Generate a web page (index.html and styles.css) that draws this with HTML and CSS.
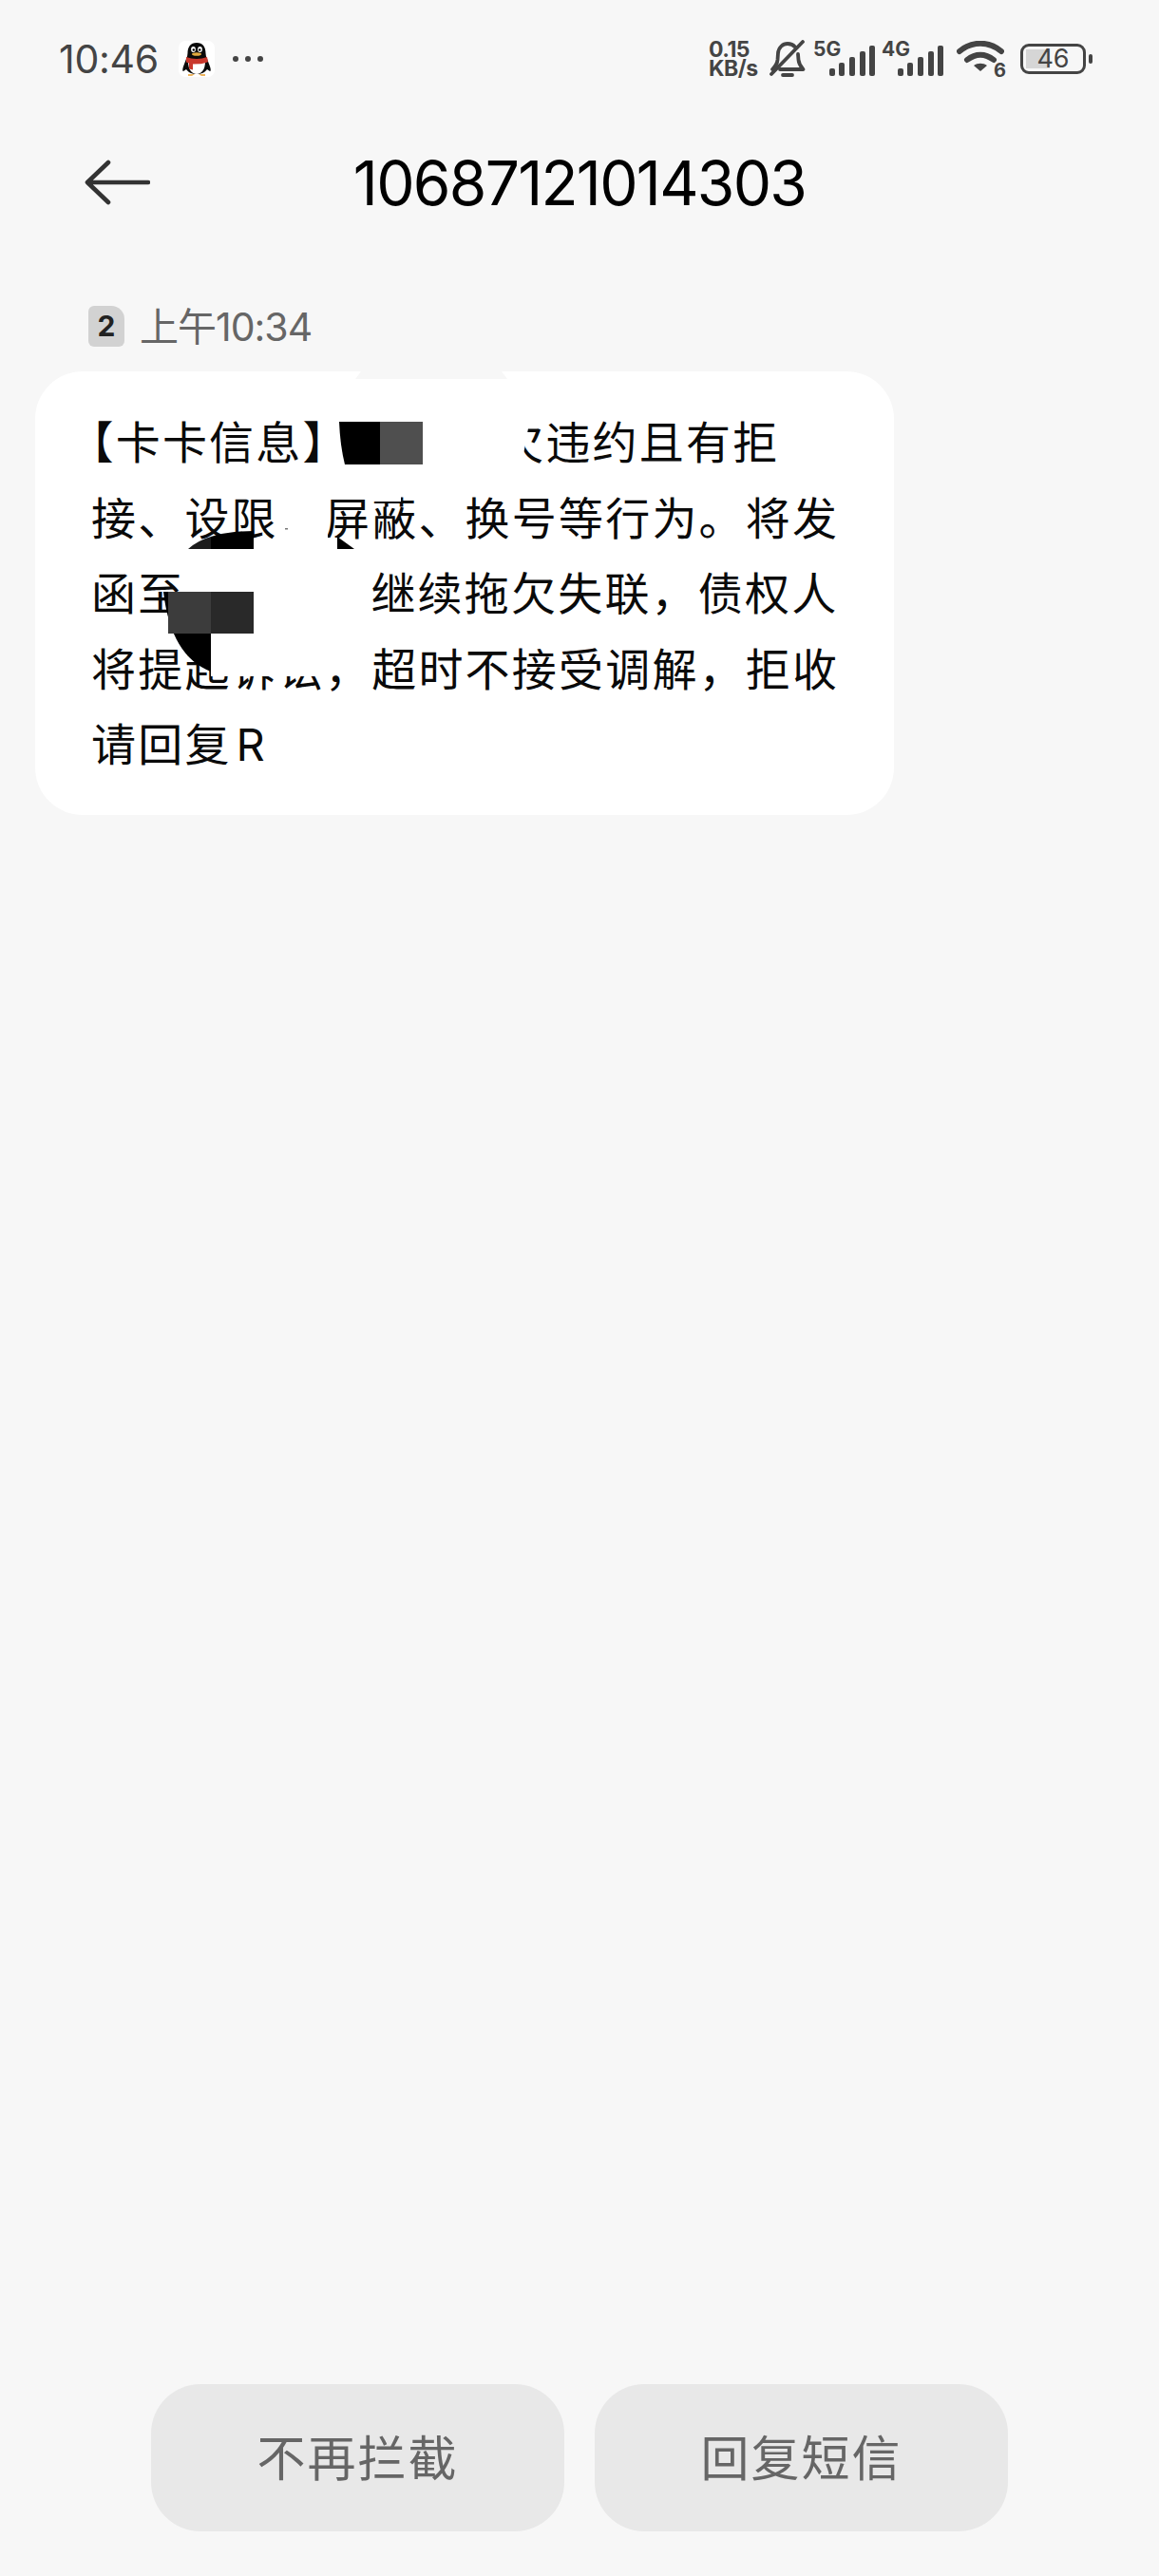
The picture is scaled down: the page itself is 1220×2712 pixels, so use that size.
FILE: index.html
```html
<!DOCTYPE html>
<html lang="zh-CN">
<head>
    <meta charset="UTF-8">
    <meta name="viewport" content="width=device-width, initial-scale=1.0">
    <title>10687121014303</title>
    <link rel="stylesheet" href="styles.css">
</head>
<body>
    <div class="page">
        <div class="status-bar">
            <div class="status-left">
                <span class="clock">10:46</span>
                <svg class="qq-icon" viewBox="0 0 40 40">
                    <rect x="1" y="1" width="38" height="38" rx="7" fill="#fff"/>
                    <path d="M20 3c-6.500 0-9.500 4.500-9.500 11 0 2-.5 4-1.500 6l-3 8c-1 3-1 5 0 5l3-2c2 3 6 5 11 5s9-2 11-5l3 2c1 0 1-2 0-5l-3-8c-1-2-1.500-4-1.500-6 0-6.500-3-11-9.500-11z" fill="#0a0a0a"/>
                    <path d="M11 23c0 8 4 13 9 13s9-5 9-13z" fill="#fff"/>
                    <ellipse cx="16.500" cy="10" rx="2.400" ry="3" fill="#fff"/>
                    <ellipse cx="23.500" cy="10" rx="2.400" ry="3" fill="#fff"/>
                    <circle cx="16.800" cy="10.500" r="1.200" fill="#000"/>
                    <circle cx="23.200" cy="10.500" r="1.200" fill="#000"/>
                    <ellipse cx="20" cy="15" rx="5" ry="1.800" fill="#e0a93f"/>
                    <path d="M9 18c7 2.500 15 2.500 22 0l1 5c-3 1.500-6 2-8 2.200l-8 .2v6l-4-1v-6l-3-1z" fill="#c9372c"/>
                    <path d="M11 36h7l-3 2h-4zM22 36h7v2h-4z" fill="#eeb45c"/>
                </svg>
                <svg class="more-dots" viewBox="0 0 34 8">
                    <circle cx="4" cy="4" r="3" fill="#444"/>
                    <circle cx="17" cy="4" r="3" fill="#444"/>
                    <circle cx="30" cy="4" r="3" fill="#444"/>
                </svg>
            </div>
            <div class="status-right">
                <div class="net-speed">0.15<br>KB/s</div>
                <svg class="bell" viewBox="0 0 40 40">
                    <path d="M4 31c3-3 5-5 5.500-10l.5-7c.5-6 5-10 10-10 3 0 6 1.200 8 3.500M31 15l.5 6c.5 5 2.500 7 5 10H12" fill="none" stroke="#444" stroke-width="3.800" stroke-linejoin="round" stroke-linecap="round"/>
                    <path d="M3 36L36 2" stroke="#444" stroke-width="3.800" stroke-linecap="round"/>
                    <path d="M15 37h10" stroke="#444" stroke-width="3.800" stroke-linecap="round"/>
                </svg>
                <div class="signal">
                    <span class="signal-label">5G</span>
                    <svg class="signal-bars" viewBox="0 0 48 32">
                        <rect x="0" y="24" width="6" height="8" rx="2"/>
                        <rect x="10" y="18" width="6" height="14" rx="2"/>
                        <rect x="21" y="12" width="6" height="20" rx="2"/>
                        <rect x="32" y="6" width="6" height="26" rx="2"/>
                        <rect x="42" y="0" width="6" height="32" rx="2"/>
                    </svg>
                </div>
                <div class="signal">
                    <span class="signal-label">4G</span>
                    <svg class="signal-bars" viewBox="0 0 48 32">
                        <rect x="0" y="24" width="6" height="8" rx="2"/>
                        <rect x="10" y="18" width="6" height="14" rx="2"/>
                        <rect x="21" y="12" width="6" height="20" rx="2"/>
                        <rect x="32" y="6" width="6" height="26" rx="2"/>
                        <rect x="42" y="0" width="6" height="32" rx="2"/>
                    </svg>
                </div>
                <div class="wifi">
                    <svg class="wifi-arcs" viewBox="0 0 50 32">
                        <path d="M3 11c13-11 31-11 44 0" fill="none" stroke="#444" stroke-width="6" stroke-linecap="round"/>
                        <path d="M11 20c9-7 19-7 28 0" fill="none" stroke="#444" stroke-width="6" stroke-linecap="round"/>
                        <path d="M25 32l-7-6c4-3 10-3 14 0z" fill="#444"/>
                    </svg>
                    <span class="wifi-num">6</span>
                </div>
                <div class="battery">
                    <div class="battery-body">
                        <div class="battery-level"></div>
                        <span class="battery-num">46</span>
                    </div>
                    <div class="battery-cap"></div>
                </div>
            </div>
        </div>

        <div class="header">
            <svg class="back-arrow" viewBox="0 0 70 48">
                <path d="M68 24H4M26 3L4 24l22 21" fill="none" stroke="#333" stroke-width="4.600" stroke-linecap="round" stroke-linejoin="round"/>
            </svg>
            <h1 class="title">10687121014303</h1>
        </div>

        <div class="msg-meta">
            <span class="sim-tag">2</span>
            <span class="msg-time">上午10:34</span>
        </div>

        <div class="bubble">
            <div class="line"><span class="half">【</span>卡卡信息<span class="half">】</span><span class="gap-a"></span>欠违约且有拒</div>
            <div class="line">接、设限、屏蔽、换号等行为。将发</div>
            <div class="line">函至<span class="gap-b"></span>继续拖欠失联，债权人</div>
            <div class="line">将提起诉讼，超时不接受调解，拒收</div>
            <div class="line">请回复<span class="latin">R</span></div>
            <!-- edits painted over the screenshot: page coordinates -->
            <svg class="marks" viewBox="37 391 905 467">
                <path d="M380 391l-6 8h160l-6-8z" fill="#f7f7f7"/>
                <path d="M512 440h46l-10 55h-36z" fill="#fff"/>
                <path d="M292 530h53v50h-53zM345 566h10v14h-10zM392 520h30v8h-30z" fill="#fff"/>
                <path d="M222 668h123v44H222z" fill="#fff"/>
                <path d="M357 444h43v45h-37q-5-20-6-45z" fill="#000"/>
                <rect x="400" y="444" width="45" height="45" fill="#4f4f4f"/>
                <path d="M198 578q10-9 24-13v13z" fill="#1c1c1c"/>
                <path d="M222 565q20-6 45-6v19h-45z" fill="#000"/>
                <path d="M355 565l18 13h-18z" fill="#000"/>
                <rect x="300" y="556" width="3" height="1.500" fill="#777"/>
                <path d="M172 623h5v44h45v40q-42-16-50-84z" fill="#000"/>
                <rect x="177" y="623" width="45" height="44" fill="#3c3c3c"/>
                <rect x="222" y="623" width="45" height="44" fill="#292929"/>
            </svg>
        </div>

        <div class="spacer"></div>

        <div class="actions">
            <button class="action-btn">不再拦截</button>
            <button class="action-btn">回复短信</button>
        </div>
    </div>
</body>
</html>
```

FILE: styles.css
```css
body {
    margin: 0;
    background-color: #f7f7f7;
    font-family: 'Inter', 'Noto Sans CJK SC', sans-serif;
    color: #000;
}
.page {
    display: flex;
    flex-direction: column;
    height: 2712px;
}
.status-bar {
    display: flex;
    justify-content: space-between;
    align-items: center;
    height: 120px;
    padding: 2px 70px 0 62px;
    color: #444;
}
.status-left, .status-right {
    display: flex;
    align-items: center;
}
.clock {
    font-size: 41px;
    line-height: 48px;
    letter-spacing: -0.3px;
}
.qq-icon {
    width: 40px;
    height: 40px;
    margin-left: 20px;
}
.more-dots {
    width: 34px;
    height: 8px;
    margin-left: 17px;
}
.net-speed {
    width: 51px;
    font-size: 23px;
    font-weight: 700;
    line-height: 20px;
    letter-spacing: -0.5px;
}
.bell {
    width: 40px;
    height: 40px;
    margin-left: 12px;
}
.signal {
    position: relative;
    width: 65px;
    height: 36px;
    margin-left: 7px;
}
.signal-label {
    position: absolute;
    left: 0;
    top: -4px;
    font-size: 21px;
    font-weight: 700;
    line-height: 24px;
}
.signal-bars {
    position: absolute;
    right: 0;
    bottom: 0;
    width: 48px;
    height: 32px;
    fill: #444;
}
.wifi {
    position: relative;
    width: 52px;
    height: 38px;
    margin-left: 14px;
}
.wifi-arcs {
    width: 50px;
    height: 32px;
}
.wifi-num {
    position: absolute;
    right: 0;
    bottom: -4px;
    font-size: 20px;
    font-weight: 700;
    line-height: 22px;
}
.battery {
    display: flex;
    align-items: center;
    margin-left: 15px;
}
.battery-body {
    position: relative;
    box-sizing: border-box;
    width: 69px;
    height: 32px;
    border: 3px solid #444;
    border-radius: 9px;
    text-align: center;
    font-size: 27px;
    line-height: 26px;
}
.battery-level {
    position: absolute;
    left: 3px;
    top: 3px;
    bottom: 3px;
    width: 25px;
    background-color: #d6d6d6;
}
.battery-num {
    position: relative;
}
.battery-cap {
    width: 4px;
    height: 10px;
    margin-left: 3px;
    border-radius: 2px;
    background-color: #444;
}
.header {
    position: relative;
    display: flex;
    justify-content: center;
    align-items: center;
    box-sizing: border-box;
    height: 140px;
    padding-top: 2px;
}
.back-arrow {
    position: absolute;
    left: 88px;
    top: 46px;
    width: 70px;
    height: 48px;
}
.title {
    margin: 0;
    font-size: 64px;
    font-weight: 400;
    line-height: 80px;
    letter-spacing: -1.7px;
}
.msg-meta {
    display: flex;
    align-items: center;
    height: 129px;
    padding-left: 93px;
    padding-top: 34px;
    box-sizing: border-box;
}
.sim-tag {
    width: 38px;
    height: 43px;
    border-radius: 6px 14px 6px 6px;
    background-color: #d2d2d2;
    color: #222;
    font-size: 30px;
    font-weight: 700;
    line-height: 43px;
    text-align: center;
}
.msg-time {
    margin-left: 16px;
    color: #666;
    font-size: 41px;
    line-height: 48px;
    letter-spacing: -1px;
}
.bubble {
    position: relative;
    box-sizing: border-box;
    width: 904px;
    height: 467px;
    margin-left: 37px;
    padding: 35px 0 0 59px;
    border-radius: 50px;
    background-color: #fff;
    font-size: 47px;
    letter-spacing: 2.2px;
    color: #0a0a0a;
}
.line {
    height: 79.6px;
    line-height: 79.6px;
    white-space: nowrap;
}
.half {
    font-feature-settings: "halt";
}
.gap-a {
    display: inline-block;
    width: 181px;
}
.gap-b {
    display: inline-block;
    width: 196px;
}
.latin {
    margin-left: 5px;
}
.marks {
    position: absolute;
    left: 0;
    top: 0;
    width: 905px;
    height: 467px;
}
.spacer {
    flex: 1;
}
.actions {
    display: flex;
    justify-content: center;
    gap: 32px;
    padding-bottom: 47px;
}
.action-btn {
    width: 435px;
    height: 155px;
    padding: 0 0 6px;
    border: none;
    border-radius: 52px;
    background-color: #e8e8e8;
    color: #666;
    font-family: inherit;
    font-size: 51px;
    letter-spacing: 2px;
}
```
